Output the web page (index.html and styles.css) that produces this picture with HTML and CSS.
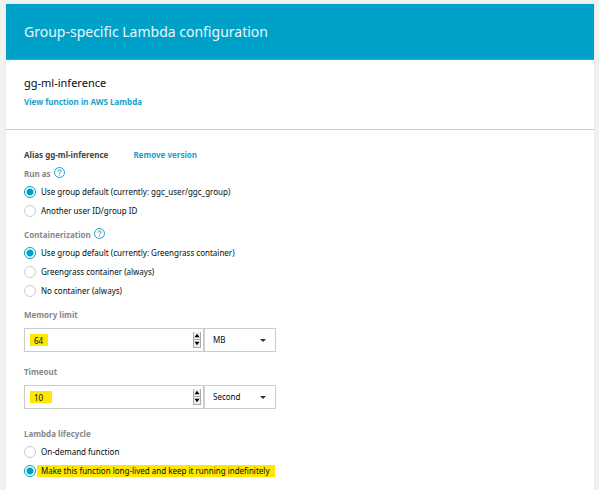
FILE: index.html
```html
<!DOCTYPE html>
<html lang="en">
<head>
<meta charset="utf-8">
<meta name="viewport" content="width=device-width, initial-scale=1">
<title>Group-specific Lambda configuration</title>
<link rel="stylesheet" href="styles.css">
</head>
<body>
<main class="panel">
  <header class="panel-header"><h1>Group-specific Lambda configuration</h1></header>
  <section class="summary">
    <h2>gg-ml-inference</h2>
    <a class="link" href="#function">View function in AWS Lambda</a>
  </section>
  <form class="settings">
    <div class="alias">
      <strong>Alias gg-ml-inference</strong>
      <a class="link" href="#remove">Remove version</a>
    </div>

    <fieldset class="group">
      <legend class="heading">Run as
        <button class="help" type="button" aria-label="Help for run as">
          <svg viewBox="0 0 11 11"><circle cx="5.500" cy="5.500" r="5"/><path d="M4 4.500C4 2.300 7.200 2.400 7.100 4.300C7.100 5.400 5.500 5.400 5.500 6.600M5.500 7.600V8.600"/></svg>
        </button>
      </legend>
      <label class="option"><input type="radio" name="user" checked><span>Use group default (currently: ggc_user/ggc_group)</span></label>
      <label class="option"><input type="radio" name="user"><span>Another user ID/group ID</span></label>
    </fieldset>

    <fieldset class="group">
      <legend class="heading">Containerization
        <button class="help" type="button" aria-label="Help for containerization">
          <svg viewBox="0 0 11 11"><circle cx="5.500" cy="5.500" r="5"/><path d="M4 4.500C4 2.300 7.200 2.400 7.100 4.300C7.100 5.400 5.500 5.400 5.500 6.600M5.500 7.600V8.600"/></svg>
        </button>
      </legend>
      <label class="option"><input type="radio" name="container" checked><span>Use group default (currently: Greengrass container)</span></label>
      <label class="option"><input type="radio" name="container"><span>Greengrass container (always)</span></label>
      <label class="option"><input type="radio" name="container"><span>No container (always)</span></label>
    </fieldset>

    <div class="field">
      <label class="heading" for="memory">Memory limit</label>
      <div class="control">
        <div class="number">
          <input id="memory" type="number" value="64">
          <div class="stepper">
            <button type="button" aria-label="Increase memory"><svg viewBox="0 0 6 6"><path d="M0 5L3 1L6 5Z"/></svg></button>
            <button type="button" aria-label="Decrease memory"><svg viewBox="0 0 6 6"><path d="M0 1L3 5L6 1Z"/></svg></button>
          </div>
        </div>
        <div class="unit"><select aria-label="Memory unit"><option>MB</option></select></div>
      </div>
    </div>

    <div class="field">
      <label class="heading" for="timeout">Timeout</label>
      <div class="control">
        <div class="number">
          <input id="timeout" class="wide-mark" type="number" value="10">
          <div class="stepper">
            <button type="button" aria-label="Increase timeout"><svg viewBox="0 0 6 6"><path d="M0 5L3 1L6 5Z"/></svg></button>
            <button type="button" aria-label="Decrease timeout"><svg viewBox="0 0 6 6"><path d="M0 1L3 5L6 1Z"/></svg></button>
          </div>
        </div>
        <div class="unit"><select aria-label="Timeout unit"><option>Second</option></select></div>
      </div>
    </div>

    <fieldset class="group lifecycle">
      <legend class="heading">Lambda lifecycle</legend>
      <label class="option"><input type="radio" name="lifecycle"><span>On-demand function</span></label>
      <label class="option"><input type="radio" name="lifecycle" checked><span class="marked">Make this function long-lived and keep it running indefinitely</span></label>
    </fieldset>
  </form>
</main>
</body>
</html>
```

FILE: styles.css
```css
* { box-sizing: border-box; }

body {
  margin: 0;
  padding: 4px 4px 0 6px;
  padding-right: 5px;
  background: #f1f1f1;
  color: #000c14;
  font: 8px/18px "Noto Sans", sans-serif;
}

.panel {
  min-height: calc(100vh - 4px);
  background: #fff;
  box-shadow: 0 0 1px #ccc;
}

.panel-header {
  padding: 18px;
  background: #00a1c9;
  border-bottom: 1px solid #22b0d2;
}

h1, h2 { margin: 0; font-weight: 400; }
h1 { color: #e6f6fa; font-size: 14px; line-height: 19px; }
h2 { font-size: 11px; line-height: 20px; }

.summary {
  padding: 13px 18px 18px;
  border-bottom: 1px solid #ccc;
}

.link {
  color: #1a9fc9;
  font-weight: 700;
  text-decoration: none;
}

.summary .link { display: block; }

.settings { padding: 15px 18px 8px; }

.alias {
  display: flex;
  gap: 25px;
  line-height: 20px;
}

.alias strong { color: #444; }

.group {
  min-width: 0;
  margin: 0 0 6px;
  padding: 0;
  border: 0;
}

.heading {
  display: flex;
  align-items: center;
  gap: 3px;
  height: 17px;
  padding: 0;
  color: #888;
  font-weight: 700;
}

.help {
  width: 11px;
  height: 11px;
  margin-bottom: 3px;
  padding: 0;
  border: 0;
  background: none;
}

.help svg {
  display: block;
  overflow: visible;
  fill: none;
  stroke: #1a9fc9;
  stroke-width: 1;
}

.option {
  display: flex;
  align-items: center;
  gap: 1px;
  height: 19px;
}

.option input {
  flex: none;
  width: 12px;
  height: 12px;
  margin: 0;
  appearance: none;
  border: 1px solid #ccc;
  border-radius: 50%;
  background: #fff;
}

.option input:checked {
  border-color: #00a1c9;
  background: radial-gradient(circle, #00a1c9 3px, #fff 4px);
}

.option span {
  padding: 0 4px;
  line-height: 12px;
}

.option .marked {
  padding-right: 6px;
  background: #ffe800;
}

.field { margin-bottom: 11px; }

.control {
  display: flex;
  max-width: 252px;
  height: 24px;
  margin-top: 5px;
}

.number {
  display: flex;
  flex: 1;
  align-items: center;
  min-width: 0;
  padding-right: 2px;
  border: 1px solid #ccc;
}

.number input {
  flex: 1;
  min-width: 0;
  height: 22px;
  padding: 0 9px;
  border: 0;
  appearance: textfield;
  background: linear-gradient(#ffe800, #ffe800) 5px 5px / 18px 12px no-repeat;
  color: inherit;
  font: inherit;
}

.number .wide-mark { background-size: 22px 12px; }

.number input::-webkit-inner-spin-button { appearance: none; margin: 0; }

.stepper {
  display: flex;
  flex-direction: column;
  width: 8px;
}

.stepper button {
  height: 8px;
  padding: 1px 0;
  border: 1px solid #aaa;
  border-width: 0 1px 1px;
  background: #eee;
}

.stepper svg { display: block; width: 100%; height: 100%; }

.unit {
  position: relative;
  width: 72px;
}

.unit select {
  width: 100%;
  height: 24px;
  padding: 0 16px 0 8px;
  appearance: none;
  border: 1px solid #ccc;
  border-radius: 0;
  background: #fff;
  color: inherit;
  font: inherit;
}

.unit::after {
  content: "";
  position: absolute;
  top: 11px;
  right: 10px;
  border: 3px solid transparent;
  border-top-color: #333;
  border-bottom: 0;
  pointer-events: none;
}

.lifecycle { margin-top: 16px; }
```
